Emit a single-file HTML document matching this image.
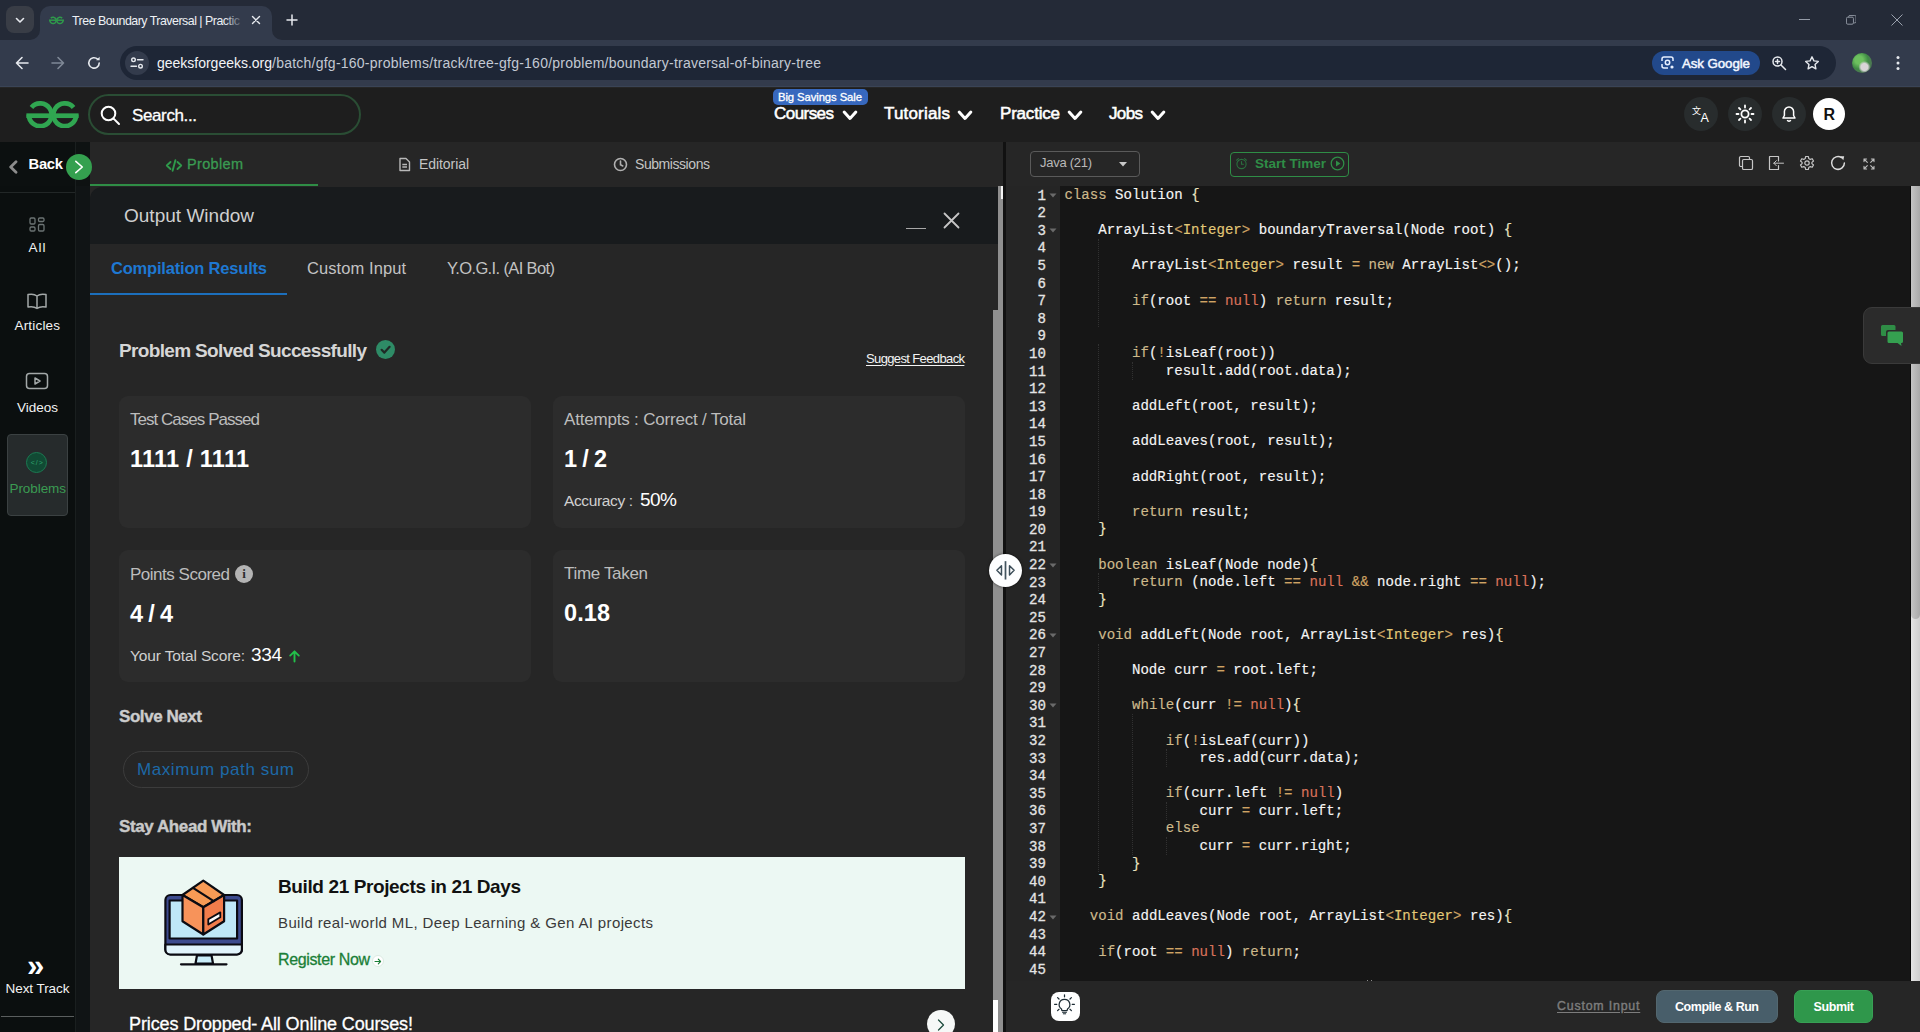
<!DOCTYPE html>
<html lang="en"><head><meta charset="utf-8"><title>Tree Boundary Traversal | Practice | GeeksforGeeks</title>
<style>
html,body{margin:0;padding:0;}
body{width:1920px;height:1032px;overflow:hidden;background:#262626;position:relative;font-family:"Liberation Sans",Arial,sans-serif;}
.b{position:absolute;box-sizing:border-box;}
.t{position:absolute;white-space:pre;font-family:"Liberation Sans",Arial,sans-serif;}
.m{font-family:"Liberation Mono","DejaVu Sans Mono",monospace;}
.code{position:absolute;left:1064.4px;top:187.1px;-webkit-text-stroke:0.15px currentColor;font-family:"Liberation Mono","DejaVu Sans Mono",monospace;font-size:14.09px;line-height:17.6px;color:#f4f4f4;white-space:pre;letter-spacing:0;}
.code div{height:17.6px;}
.ln{position:absolute;left:1006px;top:187.6px;-webkit-text-stroke:0.3px currentColor;width:40px;text-align:right;font-family:"Liberation Mono","DejaVu Sans Mono",monospace;font-size:14.09px;line-height:17.6px;color:#e4e4e4;}
.ln div{height:17.6px;}
.k{color:#cdb98b}.y{color:#e2c877}.o{color:#cfa364}.n{color:#d9725a}.p{color:#ebe5c0}
</style></head><body>
<div class="b" style="left:0px;top:0px;width:1920px;height:40px;background:#242a37;"></div>
<div class="b" style="left:0px;top:40px;width:1920px;height:46px;background:#333b4c;"></div>
<div class="b" style="left:0px;top:86px;width:1920px;height:1.3px;background:#3a4456;"></div>
<div class="b" style="left:6px;top:6px;width:28px;height:27px;background:#393d46;border-radius:8px;"></div>
<svg class="b" style="left:14px;top:14px;" width="12" height="12" viewBox="0 0 12 12"><path d="M2.5 4.5 L6 8 L9.5 4.5" fill="none" stroke="#e6e9ee" stroke-width="1.6" stroke-linecap="round" stroke-linejoin="round"/></svg>
<div class="b" style="left:40px;top:6px;width:232px;height:34px;background:#333b4c;border-radius:10px 10px 0 0;"></div>
<svg class="b" style="left:30px;top:30px;" width="10" height="10" viewBox="0 0 10 10"><path d="M10 0 A10 10 0 0 1 0 10 L10 10 Z" fill="#333b4c"/></svg>
<svg class="b" style="left:272px;top:30px;" width="10" height="10" viewBox="0 0 10 10"><path d="M0 0 A10 10 0 0 0 10 10 L0 10 Z" fill="#333b4c"/></svg>
<svg class="b" style="left:48.5px;top:16.2px;" width="15" height="8.4" viewBox="0 0 16 9"><g fill="none" stroke="#2f9a4b" stroke-width="1.6"><path d="M1.9 2.3 A3.4 3.4 0 1 1 0.9 4.5"/><path d="M0 4.5 H7.8"/><path d="M14.1 2.3 A3.4 3.4 0 1 0 15.1 4.5"/><path d="M16 4.5 H8.2"/></g></svg>
<div class="t " style="left:72.0px;top:12.8px;height:17px;line-height:17px;font-size:12.40px;font-weight:400;color:#eef1f5;letter-spacing:-0.500px;">Tree Boundary Traversal | Practic</div>
<div class="b" style="left:224px;top:8px;width:20px;height:26px;background:linear-gradient(90deg,rgba(44,54,71,0),#333b4c);"></div>
<svg class="b" style="left:251px;top:15px;" width="10" height="10" viewBox="0 0 10 10"><path d="M1.5 1.5 L8.5 8.5 M8.5 1.5 L1.5 8.5" stroke="#e6e9ee" stroke-width="1.4" stroke-linecap="round"/></svg>
<svg class="b" style="left:286px;top:14px;" width="12" height="12" viewBox="0 0 12 12"><path d="M6 1 V11 M1 6 H11" stroke="#e6e9ee" stroke-width="1.5" stroke-linecap="round"/></svg>
<svg class="b" style="left:1799px;top:19px;" width="12" height="2" viewBox="0 0 12 2"><path d="M0 0.500 H11" stroke="#959ca8" stroke-width="1"/></svg>
<svg class="b" style="left:1845.8px;top:15px;" width="10.5" height="10.5" viewBox="0 0 12 12"><rect x="0.5" y="2.5" width="8" height="8" rx="1.5" fill="none" stroke="#9aa1ad"/><path d="M3 2.5 V2 A1.5 1.5 0 0 1 4.5 0.5 H10 A1.5 1.5 0 0 1 11.5 2 V7.5 A1.5 1.5 0 0 1 10 9 H9" fill="none" stroke="#9aa1ad"/></svg>
<svg class="b" style="left:1891px;top:14px;" width="12" height="12" viewBox="0 0 12 12"><path d="M0.5 0.5 L11.5 11.5 M11.5 0.5 L0.5 11.5" stroke="#9aa1ad" stroke-width="1"/></svg>
<svg class="b" style="left:14px;top:55px;" width="16" height="16" viewBox="0 0 16 16"><path d="M14 8 H2.5 M8 2.5 L2.5 8 L8 13.5" fill="none" stroke="#e6e9ee" stroke-width="1.6" stroke-linecap="round" stroke-linejoin="round"/></svg>
<svg class="b" style="left:50px;top:55px;" width="16" height="16" viewBox="0 0 16 16"><path d="M2 8 H13.5 M8 2.5 L13.5 8 L8 13.5" fill="none" stroke="#7f8896" stroke-width="1.6" stroke-linecap="round" stroke-linejoin="round"/></svg>
<svg class="b" style="left:86px;top:55px;" width="16" height="16" viewBox="0 0 16 16"><path d="M13.2 8 A5.2 5.2 0 1 1 11.6 4.2" fill="none" stroke="#e6e9ee" stroke-width="1.6" stroke-linecap="round"/><path d="M13.6 1.8 V5.2 H10.2 Z" fill="#e6e9ee"/></svg>
<div class="b" style="left:120px;top:46px;width:1716px;height:34px;background:#1e2636;border-radius:17px;"></div>
<div class="b" style="left:125px;top:51px;width:24px;height:24px;background:#333b4c;border-radius:12px;"></div>
<svg class="b" style="left:129px;top:55px;" width="16" height="16" viewBox="0 0 16 16"><g fill="none" stroke="#e6e9ee" stroke-width="1.4" stroke-linecap="round"><circle cx="4.5" cy="4.8" r="1.8"/><path d="M8.5 4.8 H14"/><circle cx="11.5" cy="11.2" r="1.8"/><path d="M2 11.2 H7.5"/></g></svg>
<div class="t " style="left:157.0px;top:52.6px;height:20px;line-height:20px;font-size:14.00px;font-weight:400;color:#f2f4f7;letter-spacing:-0.011px;">geeksforgeeks.org</div>
<div class="t " style="left:272.0px;top:52.6px;height:20px;line-height:20px;font-size:14.00px;font-weight:400;color:#c3c9d3;letter-spacing:0.239px;">/batch/gfg-160-problems/track/tree-gfg-160/problem/boundary-traversal-of-binary-tree</div>
<div class="b" style="left:1652px;top:51px;width:108px;height:24px;background:#22498b;border-radius:12px;"></div>
<svg class="b" style="left:1660px;top:55px;" width="16" height="16" viewBox="0 0 16 16"><g fill="none" stroke="#e8f0ff" stroke-width="1.5"><path d="M2 6 V4 A2 2 0 0 1 4 2 H11 A2 2 0 0 1 13 4 V6 M2 9 V11 A2 2 0 0 0 4 13 H8"/><circle cx="7.5" cy="7.5" r="2.2"/></g><circle cx="12" cy="12" r="1.6" fill="#e8f0ff"/></svg>
<div class="t " style="left:1682.0px;top:54.0px;height:19px;line-height:19px;font-size:13.30px;font-weight:400;color:#f2f6ff;letter-spacing:-0.084px;-webkit-text-stroke:0.5px currentColor;">Ask Google</div>
<svg class="b" style="left:1771px;top:55px;" width="16" height="16" viewBox="0 0 16 16"><g fill="none" stroke="#e6e9ee" stroke-width="1.5" stroke-linecap="round"><circle cx="6.5" cy="6.5" r="4.5"/><path d="M10 10 L14.5 14.5 M4.5 6.5 H8.5 M6.5 4.5 V8.5"/></g></svg>
<svg class="b" style="left:1804px;top:55px;" width="16" height="16" viewBox="0 0 16 16"><path d="M8 1.8 L9.9 5.9 L14.3 6.4 L11 9.4 L11.9 13.8 L8 11.6 L4.1 13.8 L5 9.4 L1.7 6.4 L6.1 5.9 Z" fill="none" stroke="#e6e9ee" stroke-width="1.4" stroke-linejoin="round"/></svg>
<div class="b" style="left:1852px;top:53px;width:20px;height:20px;background:#5d9a5a;border-radius:10px;background:radial-gradient(circle at 62% 70%,#d9d5d8 0 3.5px,rgba(200,200,200,0) 6px),radial-gradient(circle at 35% 35%,#6cc05e 0 4px,#3f8a45 9px,#4c7a52 12px);"></div>
<svg class="b" style="left:1895px;top:55px;" width="6" height="16" viewBox="0 0 6 16"><circle cx="3" cy="2.5" r="1.5" fill="#e6e9ee"/><circle cx="3" cy="8" r="1.5" fill="#e6e9ee"/><circle cx="3" cy="13.5" r="1.5" fill="#e6e9ee"/></svg>
<div class="b" style="left:0px;top:88px;width:1920px;height:54px;background:#1e1e1e;"></div>
<svg class="b" style="left:26px;top:100.75px;" width="53" height="27.5" viewBox="0 0 53 27.5"><g fill="none" stroke="#30a651" stroke-width="4.7"><path d="M5.47 6.42 A11.4 11.4 0 1 1 2.8 13.75"/><path d="M0.4 14.7 H25.8"/><path d="M47.53 6.42 A11.4 11.4 0 1 0 50.2 13.75"/><path d="M52.6 14.7 H27.2"/></g></svg>
<div class="b" style="left:88px;top:94px;width:272.5px;height:41px;background:#1e1e1e;border:2px solid #2a4d34;border-radius:21px;"></div>
<svg class="b" style="left:99px;top:104px;" width="22" height="22" viewBox="0 0 22 22"><g fill="none" stroke="#fff" stroke-width="2" stroke-linecap="round"><circle cx="9.5" cy="9.5" r="6.8"/><path d="M14.6 14.6 L20 20"/></g></svg>
<div class="t " style="left:132.0px;top:103.7px;height:24px;line-height:24px;font-size:17.00px;font-weight:400;color:#fff;letter-spacing:-0.379px;-webkit-text-stroke:0.3px currentColor;">Search...</div>
<div class="b" style="left:772.5px;top:89.3px;width:95.2px;height:15.3px;background:#3768be;border-radius:5px;"></div>
<div class="t " style="left:778.0px;top:89.3px;height:16px;line-height:16px;font-size:11.30px;font-weight:400;color:#fff;letter-spacing:-0.095px;-webkit-text-stroke:0.3px currentColor;">Big Savings Sale</div>
<div class="t " style="left:774.0px;top:101.5px;height:24px;line-height:24px;font-size:17.00px;font-weight:400;color:#fff;letter-spacing:-0.551px;-webkit-text-stroke:0.55px currentColor;">Courses</div>
<svg class="b" style="left:841px;top:108.5px;" width="18" height="13" viewBox="0 0 18 13"><path d="M3.150 3 L9 9.500 L14.850 3" fill="none" stroke="#fff" stroke-width="3" stroke-linecap="round" stroke-linejoin="round"/></svg>
<div class="t " style="left:884.0px;top:101.5px;height:24px;line-height:24px;font-size:17.00px;font-weight:400;color:#fff;letter-spacing:0.180px;-webkit-text-stroke:0.55px currentColor;">Tutorials</div>
<svg class="b" style="left:956px;top:108.5px;" width="18" height="13" viewBox="0 0 18 13"><path d="M3.150 3 L9 9.500 L14.850 3" fill="none" stroke="#fff" stroke-width="3" stroke-linecap="round" stroke-linejoin="round"/></svg>
<div class="t " style="left:1000.0px;top:101.5px;height:24px;line-height:24px;font-size:17.00px;font-weight:400;color:#fff;letter-spacing:-0.202px;-webkit-text-stroke:0.55px currentColor;">Practice</div>
<svg class="b" style="left:1066px;top:108.5px;" width="18" height="13" viewBox="0 0 18 13"><path d="M3.150 3 L9 9.500 L14.850 3" fill="none" stroke="#fff" stroke-width="3" stroke-linecap="round" stroke-linejoin="round"/></svg>
<div class="t " style="left:1109.0px;top:101.5px;height:24px;line-height:24px;font-size:17.00px;font-weight:400;color:#fff;letter-spacing:-0.637px;-webkit-text-stroke:0.55px currentColor;">Jobs</div>
<svg class="b" style="left:1149px;top:108.5px;" width="18" height="13" viewBox="0 0 18 13"><path d="M3.150 3 L9 9.500 L14.850 3" fill="none" stroke="#fff" stroke-width="3" stroke-linecap="round" stroke-linejoin="round"/></svg>
<div class="b" style="left:1684px;top:97px;width:34px;height:34px;background:#282c2d;border-radius:17px;"></div>
<div class="t " style="left:1692.0px;top:104.5px;height:13px;line-height:13px;font-size:9.00px;font-weight:400;color:#fff;letter-spacing:0.000px;font-family:'Liberation Sans','Noto Sans CJK SC',sans-serif;">文</div>
<div class="t " style="left:1700.5px;top:108.5px;height:18px;line-height:18px;font-size:12.50px;font-weight:400;color:#fff;letter-spacing:0.000px;">A</div>
<div class="b" style="left:1728px;top:97px;width:34px;height:34px;background:#282c2d;border-radius:17px;"></div>
<svg class="b" style="left:1735px;top:104px;" width="20" height="20" viewBox="0 0 20 20"><g fill="none" stroke="#fff" stroke-width="1.8" stroke-linecap="round"><circle cx="10" cy="10" r="3.6"/><path d="M10 1.5 V3.5 M10 16.5 V18.5 M1.5 10 H3.5 M16.5 10 H18.5 M4 4 L5.4 5.4 M14.6 14.6 L16 16 M4 16 L5.4 14.6 M14.6 5.4 L16 4"/></g></svg>
<div class="b" style="left:1772px;top:97px;width:34px;height:34px;background:#282c2d;border-radius:17px;"></div>
<svg class="b" style="left:1780px;top:105px;" width="18" height="18" viewBox="0 0 18 18"><g fill="none" stroke="#fff" stroke-width="1.5" stroke-linejoin="round"><path d="M9 2 A4.6 4.6 0 0 0 4.4 6.6 V10.5 L3 13 H15 L13.6 10.5 V6.6 A4.6 4.6 0 0 0 9 2 Z"/><path d="M7.3 15 A1.8 1.8 0 0 0 10.7 15"/></g></svg>
<div class="b" style="left:1813px;top:98px;width:32px;height:32px;background:#fff;border-radius:16px;"></div>
<div class="t " style="left:1823.4px;top:103.8px;height:22px;line-height:22px;font-size:16.00px;font-weight:700;color:#111;letter-spacing:0.000px;">R</div>
<div class="b" style="left:0px;top:142px;width:75px;height:44px;background:#0c1010;"></div>
<div class="b" style="left:75px;top:142px;width:15px;height:44px;background:#0e1212;"></div>
<div class="b" style="left:0px;top:186px;width:75px;height:846px;background:#0b0f0f;"></div>
<div class="b" style="left:75px;top:186px;width:15px;height:846px;background:#101415;"></div>
<div class="b" style="left:75px;top:142px;width:1px;height:890px;background:#1a1f1f;"></div>
<div class="b" style="left:0px;top:192px;width:75px;height:1px;background:#222727;"></div>
<svg class="b" style="left:8px;top:159.5px;" width="11" height="14" viewBox="0 0 11 14"><path d="M8 1.800 L2.700 7 L8 12.200" fill="none" stroke="#8c8c8c" stroke-width="2.800" stroke-linecap="round" stroke-linejoin="round"/></svg>
<div class="t " style="left:28.5px;top:153.8px;height:21px;line-height:21px;font-size:14.80px;font-weight:700;color:#fff;letter-spacing:-0.294px;">Back</div>
<div class="b" style="left:90px;top:142px;width:910px;height:44px;background:#262626;"></div>
<div class="b" style="left:90px;top:184px;width:228px;height:2px;background:#2f8d46;"></div>
<svg class="b" style="left:165px;top:158.5px;" width="18" height="13" viewBox="0 0 18 13"><path d="M5.500 3 L1.800 6.500 L5.500 10 M12.500 3 L16.200 6.500 L12.500 10 M10.400 1.200 L7.600 11.800" fill="none" stroke="#2f9a4b" stroke-width="1.900" stroke-linecap="round" stroke-linejoin="round"/></svg>
<div class="b" style="left:66.3px;top:154.3px;width:25.4px;height:25.4px;background:#34a04f;border-radius:13px;"></div>
<svg class="b" style="left:72px;top:160px;" width="14" height="14" viewBox="0 0 14 14"><path d="M3.800 1.300 L10.300 7 L3.800 12.700" fill="none" stroke="#fff" stroke-width="1.600" stroke-linecap="round" stroke-linejoin="round"/></svg>
<div class="t " style="left:187.0px;top:153.5px;height:20px;line-height:20px;font-size:14.50px;font-weight:400;color:#3a9b52;letter-spacing:0.334px;-webkit-text-stroke:0.3px #3a9b52;">Problem</div>
<svg class="b" style="left:398px;top:157px;" width="13" height="15" viewBox="0 0 13 15"><g fill="none" stroke="#b8b8b8" stroke-width="1.400" stroke-linejoin="round"><path d="M2 1.500 H8 L11.500 5 V13.500 H2 Z"/><path d="M4.3 7.5 H9 M4.3 10 H9"/></g></svg>
<div class="t " style="left:419.0px;top:153.5px;height:20px;line-height:20px;font-size:14.00px;font-weight:400;color:#c4c4c4;letter-spacing:-0.073px;">Editorial</div>
<svg class="b" style="left:613px;top:157px;" width="15" height="15" viewBox="0 0 15 15"><g fill="none" stroke="#b0b0b0" stroke-width="1.600" stroke-linecap="round"><circle cx="7.500" cy="7.500" r="6"/><path d="M7.5 4 V7.8 L9.8 9"/></g></svg>
<div class="t " style="left:635.0px;top:153.5px;height:20px;line-height:20px;font-size:14.00px;font-weight:400;color:#c4c4c4;letter-spacing:-0.437px;">Submissions</div>
<svg class="b" style="left:29px;top:217px;" width="16" height="15" viewBox="0 0 16 15"><g fill="none" stroke="#6c7474" stroke-width="1.300"><rect x="1" y="1" width="5" height="6" rx="1.200"/><rect x="9.500" y="1" width="5.500" height="3.500" rx="1.200"/><rect x="1" y="10" width="5" height="4" rx="1.200"/><rect x="9.500" y="7.500" width="5.500" height="6.500" rx="1.200"/></g></svg>
<div class="t " style="left:28.5px;top:237.5px;height:19px;line-height:19px;font-size:13.50px;font-weight:400;color:#f2f2f2;letter-spacing:0.998px;">All</div>
<svg class="b" style="left:26px;top:292px;" width="22" height="19" viewBox="0 0 22 19"><g fill="none" stroke="#a3a8a8" stroke-width="1.5" stroke-linejoin="round"><path d="M11 4 C8.5 2 5 2 2 2.6 V15 C5 14.4 8.5 14.6 11 16.4 C13.5 14.6 17 14.4 20 15 V2.6 C17 2 13.5 2 11 4 Z M11 4 V16.4"/></g></svg>
<div class="t " style="left:14.5px;top:315.5px;height:19px;line-height:19px;font-size:13.50px;font-weight:400;color:#f2f2f2;letter-spacing:0.177px;">Articles</div>
<svg class="b" style="left:25px;top:372px;" width="24" height="18" viewBox="0 0 24 18"><g fill="none" stroke="#a3a8a8" stroke-width="1.5" stroke-linejoin="round"><rect x="1.5" y="1.5" width="21" height="15" rx="3"/><path d="M10 6 L15 9 L10 12 Z"/></g></svg>
<div class="t " style="left:17.0px;top:397.5px;height:19px;line-height:19px;font-size:13.50px;font-weight:400;color:#f2f2f2;letter-spacing:-0.007px;">Videos</div>
<div class="b" style="left:7px;top:434px;width:61px;height:82px;background:#262b2c;border:1px solid #3b4142;border-radius:4px;"></div>
<div class="b" style="left:26.3px;top:452.4px;width:21px;height:21px;background:#114a34;border-radius:11px;border:1px solid #1b7a52;"></div>
<div class="t " style="left:30.8px;top:458.0px;height:10px;line-height:10px;font-size:7.00px;font-weight:400;color:#2fa56e;letter-spacing:0.940px;">&lt;/&gt;</div>
<div class="t " style="left:9.5px;top:478.5px;height:19px;line-height:19px;font-size:13.50px;font-weight:400;color:#3a9b52;letter-spacing:-0.075px;">Problems</div>
<div class="t " style="left:27.0px;top:944.0px;height:43px;line-height:43px;font-size:31.00px;font-weight:700;color:#fff;letter-spacing:-0.241px;">»</div>
<div class="t " style="left:5.5px;top:978.5px;height:19px;line-height:19px;font-size:13.50px;font-weight:400;color:#f2f2f2;letter-spacing:-0.057px;">Next Track</div>
<div class="b" style="left:1px;top:1016px;width:73px;height:1px;background:#5a5e5e;"></div>
<div class="b" style="left:90px;top:186px;width:908px;height:1px;background:#262626;"></div>
<div class="b" style="left:90px;top:186.5px;width:908px;height:57px;background:#181b1d;border-radius:12px 0 0 0;"></div>
<div class="b" style="left:90px;top:243.5px;width:908px;height:788.5px;background:#262626;"></div>
<div class="t " style="left:124.0px;top:202.3px;height:27px;line-height:27px;font-size:19.00px;font-weight:400;color:#cfcfcf;letter-spacing:0.009px;">Output Window</div>
<div class="b" style="left:906px;top:228px;width:20px;height:1px;background:#a8a8a8;"></div>
<svg class="b" style="left:943px;top:211.7px;" width="17" height="17" viewBox="0 0 17 17"><path d="M1.500 1.500 L15.500 15.500 M15.500 1.500 L1.500 15.500" stroke="#c6c6c6" stroke-width="1.8" stroke-linecap="round"/></svg>
<div class="t " style="left:111.0px;top:257.0px;height:23px;line-height:23px;font-size:16.50px;font-weight:700;color:#1e78d2;letter-spacing:-0.195px;">Compilation Results</div>
<div class="b" style="left:90px;top:292.5px;width:197px;height:2.5px;background:#1c6fbc;"></div>
<div class="t " style="left:307.0px;top:257.0px;height:23px;line-height:23px;font-size:16.50px;font-weight:400;color:#c2c2c2;letter-spacing:0.079px;">Custom Input</div>
<div class="t " style="left:447.0px;top:257.0px;height:23px;line-height:23px;font-size:16.50px;font-weight:400;color:#c2c2c2;letter-spacing:-0.624px;">Y.O.G.I. (AI Bot)</div>
<div class="t " style="left:119.0px;top:337.2px;height:27px;line-height:27px;font-size:19.00px;font-weight:700;color:#d6d6d6;letter-spacing:-0.656px;">Problem Solved Successfully</div>
<div class="b" style="left:376px;top:340px;width:19px;height:19px;background:#2e8b66;border-radius:10px;"></div>
<svg class="b" style="left:379px;top:343px;" width="13" height="13" viewBox="0 0 13 13"><path d="M2.6 6.8 L5.4 9.6 L10.6 3.8" fill="none" stroke="#1f2a26" stroke-width="2.2" stroke-linecap="round" stroke-linejoin="round"/></svg>
<div class="t " style="left:866.0px;top:350.0px;height:18px;line-height:18px;font-size:13.00px;font-weight:400;color:#f4f4f4;letter-spacing:-0.627px;text-decoration:underline;text-underline-offset:2px;">Suggest Feedback</div>
<div class="b" style="left:119px;top:396px;width:412.3px;height:131.7px;background:#2c2c2c;border-radius:9px;"></div>
<div class="b" style="left:553px;top:396px;width:412.2px;height:131.7px;background:#2c2c2c;border-radius:9px;"></div>
<div class="b" style="left:119px;top:549.5px;width:412.3px;height:132.2px;background:#2c2c2c;border-radius:9px;"></div>
<div class="b" style="left:553px;top:549.5px;width:412.2px;height:132.2px;background:#2c2c2c;border-radius:9px;"></div>
<div class="t " style="left:130.0px;top:407.5px;height:24px;line-height:24px;font-size:17.00px;font-weight:400;color:#bdbdbd;letter-spacing:-0.970px;">Test Cases Passed</div>
<div class="t " style="left:130.0px;top:442.5px;height:33px;line-height:33px;font-size:23.50px;font-weight:700;color:#fff;letter-spacing:0.263px;">1111 / 1111</div>
<div class="t " style="left:564.0px;top:407.5px;height:24px;line-height:24px;font-size:17.00px;font-weight:400;color:#bdbdbd;letter-spacing:-0.190px;">Attempts : Correct / Total</div>
<div class="t " style="left:564.0px;top:442.5px;height:33px;line-height:33px;font-size:23.50px;font-weight:700;color:#fff;letter-spacing:-0.681px;">1 / 2</div>
<div class="t " style="left:564.0px;top:489.5px;height:22px;line-height:22px;font-size:15.50px;font-weight:400;color:#d0d0d0;letter-spacing:-0.373px;">Accuracy :</div>
<div class="t " style="left:640.0px;top:486.0px;height:27px;line-height:27px;font-size:19.00px;font-weight:400;color:#fff;letter-spacing:-0.514px;">50%</div>
<div class="t " style="left:130.0px;top:562.5px;height:24px;line-height:24px;font-size:17.00px;font-weight:400;color:#bdbdbd;letter-spacing:-0.487px;">Points Scored</div>
<div class="b" style="left:235px;top:564.5px;width:18px;height:18px;background:#b4b4b4;border-radius:9px;"></div>
<div class="t " style="left:242.3px;top:564.5px;height:18px;line-height:18px;font-size:13.00px;font-weight:700;color:#2d2d2d;letter-spacing:0.000px;font-family:'Liberation Serif',serif;">i</div>
<div class="t " style="left:130.0px;top:597.5px;height:33px;line-height:33px;font-size:23.50px;font-weight:700;color:#fff;letter-spacing:-0.681px;">4 / 4</div>
<div class="t " style="left:130.0px;top:644.5px;height:22px;line-height:22px;font-size:15.50px;font-weight:400;color:#d0d0d0;letter-spacing:-0.137px;">Your Total Score:</div>
<div class="t " style="left:251.0px;top:641.3px;height:27px;line-height:27px;font-size:19.00px;font-weight:400;color:#fff;letter-spacing:-0.351px;">334</div>
<svg class="b" style="left:288px;top:649px;" width="13" height="14" viewBox="0 0 13 14"><path d="M6.5 12.5 V2.5 M2.2 6.6 L6.5 2.3 L10.8 6.6" fill="none" stroke="#22c04a" stroke-width="1.9" stroke-linecap="round" stroke-linejoin="round"/></svg>
<div class="t " style="left:564.0px;top:561.5px;height:24px;line-height:24px;font-size:17.00px;font-weight:400;color:#bdbdbd;letter-spacing:-0.325px;">Time Taken</div>
<div class="t " style="left:564.0px;top:597.0px;height:33px;line-height:33px;font-size:23.50px;font-weight:700;color:#fff;letter-spacing:0.087px;">0.18</div>
<div class="t " style="left:119.0px;top:705.0px;height:24px;line-height:24px;font-size:17.00px;font-weight:700;color:#cccccc;letter-spacing:-0.436px;-webkit-text-stroke:0.4px currentColor;">Solve Next</div>
<div class="b" style="left:123px;top:751px;width:186px;height:37px;border:1px solid #3c3c3c;border-radius:19px;"></div>
<div class="t " style="left:137.0px;top:757.5px;height:24px;line-height:24px;font-size:17.00px;font-weight:400;color:#1d69a6;letter-spacing:0.579px;">Maximum path sum</div>
<div class="t " style="left:119.0px;top:815.0px;height:24px;line-height:24px;font-size:17.00px;font-weight:700;color:#c9c9c9;letter-spacing:-0.401px;-webkit-text-stroke:0.4px currentColor;">Stay Ahead With:</div>
<div class="b" style="left:119px;top:857px;width:846px;height:132px;background:#ecf8f3;"></div>
<div class="t " style="left:278.0px;top:872.5px;height:27px;line-height:27px;font-size:19.00px;font-weight:700;color:#111;letter-spacing:-0.387px;">Build 21 Projects in 21 Days</div>
<div class="t " style="left:278.0px;top:911.5px;height:21px;line-height:21px;font-size:15.00px;font-weight:400;color:#3a3a3a;letter-spacing:0.372px;">Build real-world ML, Deep Learning &amp; Gen AI projects</div>
<div class="t " style="left:278.0px;top:949.0px;height:22px;line-height:22px;font-size:16.00px;font-weight:400;color:#1a7f37;letter-spacing:-0.367px;-webkit-text-stroke:0.3px currentColor;">Register Now</div>
<div class="b" style="left:371.5px;top:955px;width:12px;height:12px;background:#fff;border-radius:6px;border:1px solid #dcebe3;"></div>
<svg class="b" style="left:373.5px;top:957.5px;" width="8" height="7" viewBox="0 0 8 7"><path d="M1 3.5 H6.5 M4.3 1.2 L6.6 3.5 L4.3 5.8" fill="none" stroke="#1a7f37" stroke-width="1.1" stroke-linecap="round" stroke-linejoin="round"/></svg>
<div class="t " style="left:129.0px;top:1011.5px;height:25px;line-height:25px;font-size:18.00px;font-weight:400;color:#fff;letter-spacing:-0.122px;-webkit-text-stroke:0.3px currentColor;">Prices Dropped- All Online Courses!</div>
<div class="b" style="left:927px;top:1010px;width:28.4px;height:28.4px;background:#f6f8f7;border-radius:14.200px;"></div>
<svg class="b" style="left:936.3px;top:1018.3px;" width="10" height="14" viewBox="0 0 10 14"><path d="M2.500 2 L7.500 7 L2.500 12" fill="none" stroke="#1f4d3e" stroke-width="1.300" stroke-linecap="round" stroke-linejoin="round"/></svg>
<div class="b" style="left:998px;top:186px;width:5px;height:846px;background:#8f8f8f;"></div>
<div class="b" style="left:1001px;top:186px;width:2px;height:13px;background:#f2f2f2;"></div>
<div class="b" style="left:993px;top:310px;width:5px;height:690px;background:#8f8f8f;"></div>
<div class="b" style="left:993px;top:1000px;width:5px;height:32px;background:#ffffff;"></div>
<div class="b" style="left:1003px;top:142px;width:3px;height:890px;background:#111111;"></div>
<div class="b" style="left:1006px;top:142px;width:914px;height:44px;background:#262626;"></div>
<div class="b" style="left:1006px;top:186px;width:54px;height:795px;background:#252525;"></div>
<div class="b" style="left:1060px;top:186px;width:850px;height:795px;background:#161616;"></div>
<div class="b" style="left:1006px;top:981px;width:914px;height:51px;background:#262626;"></div>
<div class="b" style="left:1030px;top:150.8px;width:109.5px;height:26px;border:1px solid #5a5a5a;border-radius:4px;"></div>
<div class="t " style="left:1040.0px;top:154.0px;height:18px;line-height:18px;font-size:13.00px;font-weight:400;color:#b9b9b9;letter-spacing:-0.274px;">Java (21)</div>
<svg class="b" style="left:1118px;top:161px;" width="10" height="6" viewBox="0 0 10 6"><path d="M1 1 H9 L5 5.5 Z" fill="#c8c8c8"/></svg>
<div class="b" style="left:1229.8px;top:152.2px;width:119.2px;height:25px;border:1px solid #2f8d46;border-radius:4px;"></div>
<svg class="b" style="left:1234.7px;top:157.3px;" width="13" height="13" viewBox="0 0 13 13"><g fill="none" stroke="#2a6f3e" stroke-width="1.1" stroke-linecap="round"><circle cx="6.5" cy="7" r="4.6"/><path d="M6.5 4.6 V7.2 H8.4 M1.6 3.2 L3.4 1.6 M11.4 3.2 L9.6 1.6"/></g></svg>
<div class="t " style="left:1255.0px;top:154.0px;height:19px;line-height:19px;font-size:13.50px;font-weight:700;color:#2f8d46;letter-spacing:-0.003px;">Start Timer</div>
<svg class="b" style="left:1330px;top:156px;" width="15" height="15" viewBox="0 0 15 15"><circle cx="7.5" cy="7.5" r="6.3" fill="none" stroke="#2f8d46" stroke-width="1.3"/><path d="M6 4.6 L10.4 7.5 L6 10.4 Z" fill="#2f8d46"/></svg>
<svg class="b" style="left:1738px;top:155px;" width="16" height="16" viewBox="0 0 16 16"><g fill="none" stroke="#c6c6c6" stroke-width="1.200"><rect x="4.500" y="4.500" width="10" height="10" rx="1.300"/><path d="M11.500 4.500 V2.800 A1.300 1.300 0 0 0 10.200 1.500 H2.800 A1.300 1.300 0 0 0 1.500 2.800 V10.200 A1.300 1.300 0 0 0 2.800 11.500 H4.500"/></g></svg>
<svg class="b" style="left:1768px;top:155px;" width="17" height="16" viewBox="0 0 17 16"><g fill="none" stroke="#c6c6c6" stroke-width="1.200" stroke-linecap="round" stroke-linejoin="round"><path d="M10.500 6 V1.500 H1.500 V14.500 H10.500 V10.500"/><path d="M15.500 8.200 H5.800 M8.300 5.700 L5.800 8.200 L8.300 10.700" stroke-width="1"/></g></svg>
<svg class="b" style="left:1799px;top:155px;" width="16" height="16" viewBox="0 0 16 16"><g fill="none" stroke="#c6c6c6" stroke-width="1.200" stroke-linejoin="round"><path d="M6.700 1.500 H9.300 L9.800 3.600 L11.200 4.400 L13.200 3.700 L14.500 6 L12.900 7.400 V8.600 L14.500 10 L13.200 12.300 L11.200 11.600 L9.800 12.400 L9.300 14.500 H6.700 L6.200 12.400 L4.800 11.600 L2.800 12.300 L1.500 10 L3.100 8.600 V7.400 L1.500 6 L2.800 3.700 L4.800 4.400 L6.200 3.600 Z"/><circle cx="8" cy="8" r="2.200"/></g></svg>
<svg class="b" style="left:1829px;top:154px;" width="18" height="18" viewBox="0 0 18 18"><path d="M15.400 9 A6.400 6.400 0 1 1 12.500 3.600" fill="none" stroke="#dcdcdc" stroke-width="1.500" stroke-linecap="round"/><path d="M11.200 2.300 L15.200 2.200 L14.300 6.200 Z" fill="#dcdcdc"/></svg>
<svg class="b" style="left:1863.3px;top:157.5px;" width="12" height="12" viewBox="0 0 12 12"><g fill="none" stroke="#bdbdbd" stroke-width="1.100" stroke-linecap="round" stroke-linejoin="round"><path d="M1 1 L4.300 4.300 M1 3.600 V1 H3.600"/><path d="M11 1 L7.700 4.300 M8.400 1 H11 V3.600"/><path d="M1 11 L4.300 7.700 M1 8.400 V11 H3.600"/><path d="M11 11 L7.700 7.700 M8.400 11 H11 V8.400"/></g></svg>
<div class="b" style="left:1910px;top:186px;width:1px;height:795px;background:#0a0a0a;"></div>
<div class="b" style="left:1911px;top:186px;width:9px;height:795px;background:linear-gradient(90deg,#e4e4e4,#cfcfcf);"></div>
<div class="b" style="left:1911px;top:186px;width:9px;height:433px;background:linear-gradient(90deg,#c4c4c4,#a9a9a9);border-radius:0 0 5px 5px;"></div>
<div class="b" style="left:1863px;top:307px;width:67px;height:57px;background:#2b2b2b;border-radius:9px;border:1px solid #3a3a3a;"></div>
<svg class="b" style="left:1880px;top:324px;" width="24" height="24" viewBox="0 0 24 24"><path d="M1 2.5 A1.5 1.5 0 0 1 2.5 1 H14 A1.5 1.5 0 0 1 15.500 2.5 V6 H8 A2 2 0 0 0 6 8 V12 H2.500 A1.5 1.5 0 0 1 1 10.5 Z" fill="#2f8d46"/><path d="M7.500 9 A1.5 1.5 0 0 1 9 7.500 H21.500 A1.5 1.5 0 0 1 23 9 V17.500 A1.5 1.5 0 0 1 21.500 19 H21 L21.500 22 L17.500 19 H9 A1.5 1.5 0 0 1 7.500 17.500 Z" fill="#35a050"/></svg>
<div class="b" style="left:1050.8px;top:992px;width:28.9px;height:28.5px;background:#fff;border-radius:8px;"></div>
<svg class="b" style="left:1054.2px;top:994.2px;" width="21" height="23" viewBox="0 0 21 23"><g fill="none" stroke="#1c2b33" stroke-width="1.250" stroke-linecap="round" stroke-linejoin="round"><path d="M10.500 5.300 A5.300 5.300 0 0 0 7.500 15 L7.900 16.700 H13.100 L13.500 15 A5.300 5.300 0 0 0 10.500 5.300 Z"/><path d="M8.500 18.300 H12.500 M9.300 19.800 H11.700" stroke-width="1"/><path d="M10.500 0.800 V2.800 M3.600 3.600 L5 5 M17.400 3.600 L16 5 M0.600 10.300 H2.800 M18.200 10.300 H20.400 M3.600 16.600 L5 15.300 M17.400 16.600 L16 15.300"/></g></svg>
<div class="t " style="left:1557.0px;top:997.5px;height:17px;line-height:17px;font-size:12.40px;font-weight:400;color:#7d7d7d;letter-spacing:0.796px;text-decoration:underline;text-underline-offset:2px;-webkit-text-stroke:0.4px currentColor;">Custom Input</div>
<div class="b" style="left:1656px;top:989.7px;width:122.2px;height:33.3px;background:#485e6a;border-radius:8px;border:1px solid #53676f;"></div>
<div class="t " style="left:1675.0px;top:997.5px;height:18px;line-height:18px;font-size:12.50px;font-weight:700;color:#fff;letter-spacing:-0.465px;">Compile &amp; Run</div>
<div class="b" style="left:1794px;top:990px;width:79.2px;height:33px;background:#2f974b;border-radius:7px;border:1px solid #38a055;"></div>
<div class="t " style="left:1813.5px;top:997.5px;height:18px;line-height:18px;font-size:12.50px;font-weight:700;color:#fff;letter-spacing:-0.372px;">Submit</div>
<div class="ln"><div>1</div><div>2</div><div>3</div><div>4</div><div>5</div><div>6</div><div>7</div><div>8</div><div>9</div><div>10</div><div>11</div><div>12</div><div>13</div><div>14</div><div>15</div><div>16</div><div>17</div><div>18</div><div>19</div><div>20</div><div>21</div><div>22</div><div>23</div><div>24</div><div>25</div><div>26</div><div>27</div><div>28</div><div>29</div><div>30</div><div>31</div><div>32</div><div>33</div><div>34</div><div>35</div><div>36</div><div>37</div><div>38</div><div>39</div><div>40</div><div>41</div><div>42</div><div>43</div><div>44</div><div>45</div></div>
<div class="code"><div><span class="k">class</span> Solution <span class="p">{</span></div><div></div><div>    ArrayList<span class="o">&lt;</span><span class="y">Integer</span><span class="o">&gt;</span> boundaryTraversal(Node root) <span class="p">{</span></div><div></div><div>        ArrayList<span class="o">&lt;</span><span class="y">Integer</span><span class="o">&gt;</span> result <span class="o">=</span> <span class="k">new</span> ArrayList<span class="o">&lt;&gt;</span>();</div><div></div><div>        <span class="k">if</span>(root <span class="o">==</span> <span class="n">null</span>) <span class="k">return</span> result;</div><div></div><div></div><div>        <span class="k">if</span>(<span class="o">!</span>isLeaf(root))</div><div>            result.add(root.data);</div><div></div><div>        addLeft(root, result);</div><div></div><div>        addLeaves(root, result);</div><div></div><div>        addRight(root, result);</div><div></div><div>        <span class="k">return</span> result;</div><div>    <span class="p">}</span></div><div></div><div>    <span class="k">boolean</span> isLeaf(Node node)<span class="p">{</span></div><div>        <span class="k">return</span> (node.left <span class="o">==</span> <span class="n">null</span> <span class="o">&amp;&amp;</span> node.right <span class="o">==</span> <span class="n">null</span>);</div><div>    <span class="p">}</span></div><div></div><div>    <span class="k">void</span> addLeft(Node root, ArrayList<span class="o">&lt;</span><span class="y">Integer</span><span class="o">&gt;</span> res)<span class="p">{</span></div><div></div><div>        Node curr <span class="o">=</span> root.left;</div><div></div><div>        <span class="k">while</span>(curr <span class="o">!=</span> <span class="n">null</span>)<span class="p">{</span></div><div></div><div>            <span class="k">if</span>(<span class="o">!</span>isLeaf(curr))</div><div>                res.add(curr.data);</div><div></div><div>            <span class="k">if</span>(curr.left <span class="o">!=</span> <span class="n">null</span>)</div><div>                curr <span class="o">=</span> curr.left;</div><div>            <span class="k">else</span></div><div>                curr <span class="o">=</span> curr.right;</div><div>        <span class="p">}</span></div><div>    <span class="p">}</span></div><div></div><div>   <span class="k">void</span> addLeaves(Node root, ArrayList<span class="o">&lt;</span><span class="y">Integer</span><span class="o">&gt;</span> res)<span class="p">{</span></div><div></div><div>    <span class="k">if</span>(root <span class="o">==</span> <span class="n">null</span>) <span class="k">return</span>;</div><div></div></div>
<svg class="b" style="left:1049px;top:193px;" width="8" height="5" viewBox="0 0 8 5"><path d="M0.500 0.500 H7.500 L4 4.500 Z" fill="#6a6a6a"/></svg>
<svg class="b" style="left:1049px;top:228.2px;" width="8" height="5" viewBox="0 0 8 5"><path d="M0.500 0.500 H7.500 L4 4.500 Z" fill="#6a6a6a"/></svg>
<svg class="b" style="left:1049px;top:562.6px;" width="8" height="5" viewBox="0 0 8 5"><path d="M0.500 0.500 H7.500 L4 4.500 Z" fill="#6a6a6a"/></svg>
<svg class="b" style="left:1049px;top:633px;" width="8" height="5" viewBox="0 0 8 5"><path d="M0.500 0.500 H7.500 L4 4.500 Z" fill="#6a6a6a"/></svg>
<svg class="b" style="left:1049px;top:703.4px;" width="8" height="5" viewBox="0 0 8 5"><path d="M0.500 0.500 H7.500 L4 4.500 Z" fill="#6a6a6a"/></svg>
<svg class="b" style="left:1049px;top:914.6px;" width="8" height="5" viewBox="0 0 8 5"><path d="M0.500 0.500 H7.500 L4 4.500 Z" fill="#6a6a6a"/></svg>
<div class="b" style="left:1098.22px;top:238.8px;width:1px;height:88px;border-left:1px dotted #313131;"></div>
<div class="b" style="left:1098.22px;top:344.4px;width:1px;height:176px;border-left:1px dotted #313131;"></div>
<div class="b" style="left:1132.04px;top:362px;width:1px;height:17.6px;border-left:1px dotted #313131;"></div>
<div class="b" style="left:1098.22px;top:573.2px;width:1px;height:17.6px;border-left:1px dotted #313131;"></div>
<div class="b" style="left:1098.22px;top:643.6px;width:1px;height:228.8px;border-left:1px dotted #313131;"></div>
<div class="b" style="left:1132.04px;top:714px;width:1px;height:140.8px;border-left:1px dotted #313131;"></div>
<div class="b" style="left:1165.86px;top:749.2px;width:1px;height:17.6px;border-left:1px dotted #313131;"></div>
<div class="b" style="left:1165.86px;top:802px;width:1px;height:17.6px;border-left:1px dotted #313131;"></div>
<div class="b" style="left:1165.86px;top:837.2px;width:1px;height:17.6px;border-left:1px dotted #313131;"></div>
<div class="b" style="left:988.5px;top:553.5px;width:33px;height:33px;background:#fdfeff;border-radius:16.5px;box-shadow:0 0 3px rgba(0,0,0,.6);"></div>
<svg class="b" style="left:993.5px;top:559.65px;" width="23" height="20.7" viewBox="0 0 20 18"><path d="M10 1 V17" stroke="#43555f" stroke-width="1.500"/><path d="M6.500 5 L2.500 9 L6.500 13 Z M13.500 5 L17.500 9 L13.500 13 Z" fill="none" stroke="#3d4f5a" stroke-width="1.300" stroke-linejoin="round"/></svg>
<svg class="b" style="left:150px;top:870px;" width="110" height="110" viewBox="0 0 110 110"><g stroke="#0b0b12" stroke-width="2.200" stroke-linejoin="round" stroke-linecap="round">
<path d="M47 85.300 L45.500 93.500 H63 L61.500 85.300 Z" fill="#c9edf9"/>
<path d="M31 94.300 H76.500" fill="none"/>
<rect x="15.400" y="25" width="76.500" height="59.500" rx="5" fill="#3d4b8e"/>
<path d="M15.400 74.500 H91.900 V79.500 A5 5 0 0 1 86.900 84.500 H20.400 A5 5 0 0 1 15.400 79.500 Z" fill="#e1f4fb"/>
<rect x="19.600" y="30.500" width="67.500" height="38" fill="#bfe8f7"/>
<path d="M53.300 10.700 L74.100 25 L53.300 37.300 L32.500 25 Z" fill="#f79a55"/>
<path d="M32.500 25 L53.300 37.300 V64.500 L32.500 51.200 Z" fill="#f7935a"/>
<path d="M74.100 25 L53.300 37.300 V64.500 L74.100 51.200 Z" fill="#f27d4b"/>
<path d="M43 17.800 L63.700 31.200" fill="none"/>
<path d="M58.300 49.300 L70.300 42.400 V47.300 L58.300 54.500 Z" fill="#fdfdfd" stroke-width="1.800"/>
</g></svg>
<div class="b" style="left:1367px;top:979.5px;width:1.2px;height:1.5px;background:#8a8a8a;"></div>
<div class="b" style="left:1371px;top:979.5px;width:1.2px;height:1.5px;background:#8a8a8a;"></div>
</body></html>
